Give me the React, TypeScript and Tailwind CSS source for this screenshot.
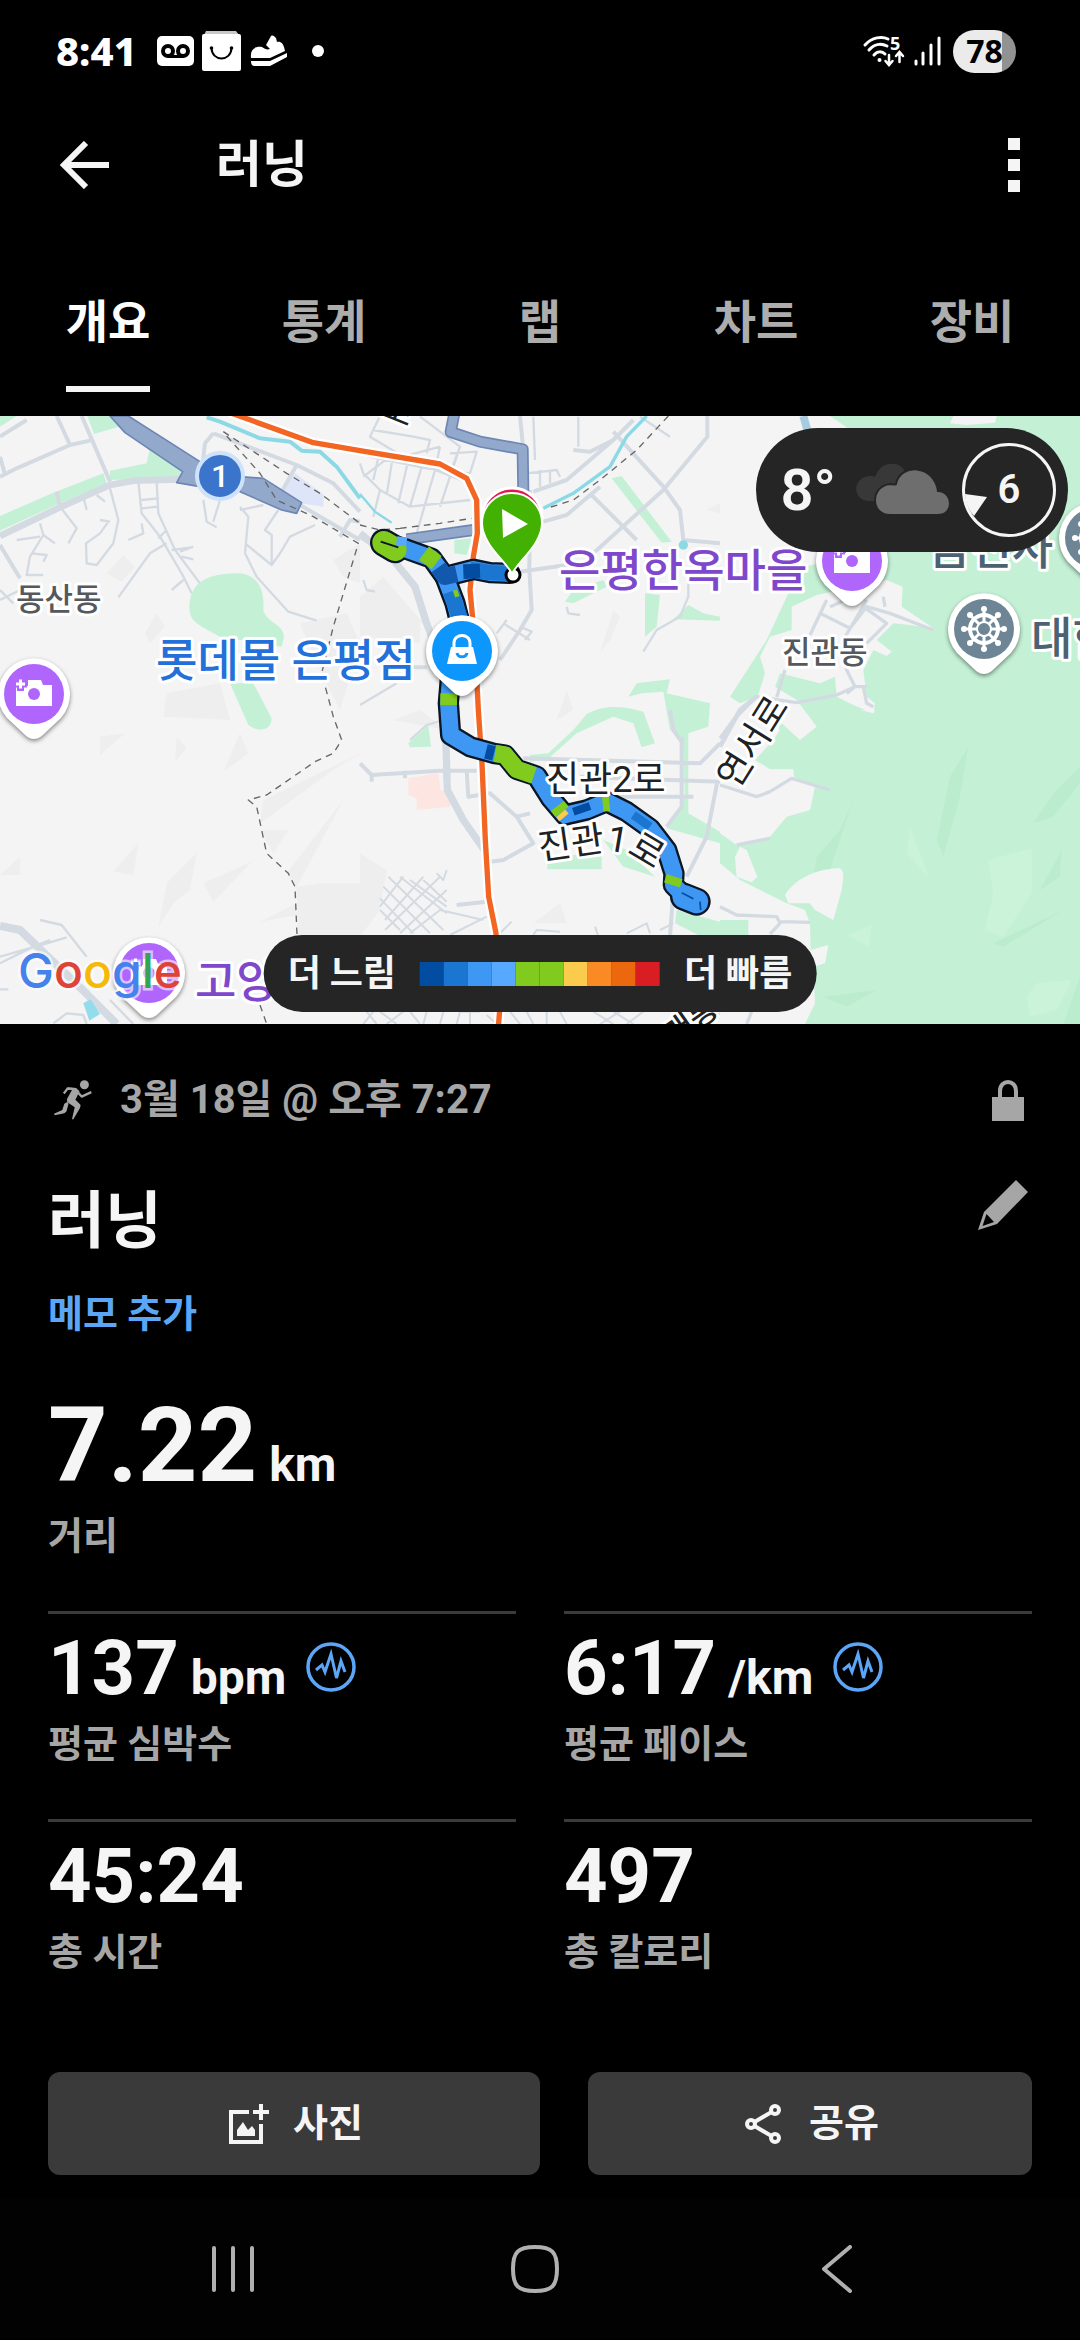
import { type ReactNode } from "react";

const TABS = ["개요", "통계", "랩", "차트", "장비"];

const PACE_COLORS = [
  "bg-[#024da1]",
  "bg-[#1b76d2]",
  "bg-[#3d97f3]",
  "bg-[#57a8ff]",
  "bg-[#81cb1e]",
  "bg-[#81cb1e]",
  "bg-[#facb4d]",
  "bg-[#fa8a25]",
  "bg-[#ec680e]",
  "bg-[#d81e22]",
];

type Stat = { value: string; unit?: string; label: string; graph?: boolean };

const STATS: Stat[] = [
  { value: "137", unit: "bpm", label: "평균 심박수", graph: true },
  { value: "6:17", unit: "/km", label: "평균 페이스", graph: true },
  { value: "45:24", label: "총 시간" },
  { value: "497", label: "총 칼로리" },
];

function StatusBar() {
  return (
    <div className="flex h-[102px] items-center justify-between pl-14 pr-16 text-white">
      <div className="flex items-center">
        <span className="font-['Noto_Sans'] text-[40px] leading-none font-extrabold">8:41</span>
        <svg className="ml-5 h-[30px] w-[37px]" viewBox="0 0 37 30" fill="none">
          <rect width="37" height="30" rx="5" fill="#fff" />
          <circle cx="11" cy="15" r="5" stroke="#000" strokeWidth="4" />
          <circle cx="26" cy="15" r="5" stroke="#000" strokeWidth="4" />
          <path d="M11 20.500H26" stroke="#000" strokeWidth="3" />
        </svg>
        <svg className="ml-2 h-10 w-10" viewBox="0 0 40 40" fill="none">
          <path d="M4 0H34L37 4H2Z" fill="#c8c8c8" />
          <rect y="3" width="39" height="37" rx="2" fill="#fff" />
          <path d="M9.500 17C10 31 29 31 29.500 17" stroke="#000" strokeWidth="2" />
          <circle cx="9.500" cy="17" r="1.800" fill="#000" />
          <circle cx="29.500" cy="17" r="1.800" fill="#000" />
        </svg>
        <svg className="ml-2 h-8 w-[38px]" viewBox="0 0 38 32" fill="#fff">
          <path d="M1 23C0 15 4 11 12 12C15 14 17 15 20 14L16 10L21 1C23 0 24 1 26 3L27 7C31 6 33 9 34 12L35 16L20 23Z" />
          <path d="M1 26H20L37 18V22L20 31H5C2 31 1 29 1 26Z" />
        </svg>
        <span className="ml-6 h-3 w-3 rounded-full bg-white" />
      </div>

      <div className="flex items-center">
        <svg
          className="h-8 w-[42px] overflow-visible"
          viewBox="0 0 42 32"
          fill="none"
          stroke="#fff"
          strokeWidth="3"
          strokeLinecap="round"
        >
          <path d="M2 10C9 2 19 1 25 4M6 15C11 9 18 8 24 11M11 20C14 16 19 16 22 19" />
          <circle cx="16.500" cy="25" r="2" fill="#fff" stroke="none" />
          <path d="M26 20V29M22.500 26L26 30L29.500 26M36.500 27V18M33 21L36.500 17L40 21" strokeWidth="2.500" />
          <text x="27" y="15" fill="#fff" stroke="none" className="font-['Noto_Sans'] text-[18px] font-bold">
            5
          </text>
        </svg>
        <svg className="ml-2 h-[30px] w-7" viewBox="0 0 28 30" stroke="#fff" strokeWidth="3" strokeLinecap="round">
          <path d="M3 25V28M10 17V28M18 9V28M26 2V28" />
        </svg>
        <span className="ml-3 flex h-[43px] w-[63px] items-center justify-center rounded-full bg-linear-to-r from-[#ebebeb] from-78% to-[#929292] to-78% font-['Noto_Sans'] text-[32px] leading-none font-bold text-black">
          78
        </span>
      </div>
    </div>
  );
}

function MapPin({ x, y, color, children }: { x: number; y: number; color: string; children: ReactNode }) {
  return (
    <g transform={`translate(${x} ${y})`}>
      <path
        d="M0 45C-5 45-8 42-12 38L-27 24A36 36 0 1 1 27 24L12 38C8 42 5 45 0 45Z"
        fill="#fff"
        className="drop-shadow-[0_2px_2px_rgba(0,0,0,0.45)]"
      />
      <circle r="30" fill={color} />
      {children}
    </g>
  );
}

function CameraGlyph() {
  return (
    <g>
      <path d="M-18-8H-6V-14H7L9-9H18V12H-18Z" fill="#fff" />
      <circle r="6" fill="#b066fd" />
      <path d="M-20-10H-7M-13.500-17V-3" stroke="#b066fd" strokeWidth="7" />
      <path d="M-18-10H-9M-13.500-14.500V-5.500" stroke="#fff" strokeWidth="3" />
    </g>
  );
}

function WheelGlyph() {
  return (
    <g stroke="#fff" fill="none">
      <circle r="14" strokeWidth="4" />
      <path d="M0-21V21M-21 0H21M-14-14L14 14M-14 14L14-14" strokeWidth="3" />
      <path
        d="M0-20V-20M0 20V20M-20 0H-20M20 0H20M-14-14H-14M14 14H14M-14 14H-14M14-14H14"
        strokeWidth="6"
        strokeLinecap="round"
      />
      <circle r="7" fill="#6d8594" strokeWidth="2" />
    </g>
  );
}

// The terrain is drawn on a 3240 x 1824 grid, cut into three columns of 1080.
function Terrain() {
  return (
    <g transform="scale(0.33333)" fill="none" strokeLinejoin="round">
      <g transform="translate(0 -18)">
        <g fill="#eeeeef">
          <path d="M370 435L405 470L365 515L320 490Z" />
          <path d="M470 610L495 650L450 700L435 670Z" />
          <path d="M500 850L660 820L690 930L490 920Z" />
          <path d="M1000 450L1080 400V520L1030 500ZM900 640L1040 610L1080 700L1020 900L960 780Z" />
          <path d="M300 980L375 970L300 1035ZM530 980L560 1015L525 1055ZM720 970L745 1030L670 1085Z" />
          <path d="M415 1300L400 1395L340 1385ZM590 1330L570 1440L520 1480L475 1550L500 1420ZM755 1355L640 1475L610 1420Z" />
          <path d="M1080 1030L1000 1080L780 1240L790 1170ZM780 1260L865 1260L820 1330ZM1030 1170L960 1300L890 1430L960 1420H1080V1580H895L890 1440L860 1390Z" />
          <path d="M60 1340V1395H0ZM890 1480L780 1535L890 1515Z" />
        </g>
        <g fill="#c4f1d6">
          <path d="M0 18H50L0 50Z" />
          <path d="M262 18H345L375 45L282 72Z" />
          <path d="M330 182L440 160L448 122L400 70L545 180L535 205L330 210Z" />
          <path d="M0 318L160 248L310 190L320 222L180 280L0 362Z" />
          <path d="M568 590C570 500 650 490 720 490C790 500 792 560 790 600C800 640 850 640 852 680L845 710L660 680C600 645 568 640 568 590Z" />
          <path d="M690 820H760L815 925C815 960 780 970 745 945Z" />
        </g>
        <path d="M885 190L972 255L970 290L900 280L848 240Z" fill="#dfe5f8" />
        <g stroke="#d4dae2">
          <path d="M0 378L180 292L330 225L400 212L540 208" strokeWidth="20" />
          <path
            d="M245 18L330 215M170 18L210 105M0 200L50 175L210 105L270 92M0 80L80 30M0 405L60 505M0 140L14 190M900 285L1080 390M640 70L615 100L608 160M640 70L890 165L1000 220L1080 305M890 165L845 245M1020 380L1050 330L1080 335M170 245L180 290"
            strokeWidth="12"
          />
          <path
            d="M330 235L355 330L340 400L290 465L260 460L258 400L300 370L325 335M415 215L425 310L480 380L545 490L575 550M470 215L475 310L525 420L600 520M355 562L450 430L500 400M120 340L130 375L90 440L80 495H130M180 290L230 355L205 400M610 270L620 335L650 352M660 270L640 335M720 290L745 320L735 430L770 500L865 605L950 632M735 400L815 465V375L795 360L835 300M815 465L840 430L870 380L945 345M425 270L475 265M425 295L475 290M475 385L500 360M300 330L330 335M50 390L120 380M260 300L250 260M290 255L315 275M130 375L165 400M95 430L140 435L130 455M425 340L430 370L385 390M720 300L790 285M540 425L580 410M545 440L580 448M515 420L575 412M515 540L550 510M0 540L40 580M0 570L60 540"
            strokeWidth="7"
          />
          <path d="M0 1548L60 1560L250 1742L350 1842" strokeWidth="24" />
          <path
            d="M120 1530L185 1545L260 1640M0 1660L100 1610L150 1590M0 1640L140 1600L200 1582M160 1840L200 1810L250 1815L260 1842M0 1738H25M330 1770L400 1842"
            strokeWidth="7"
          />
        </g>
        <path d="M250 1780L272 1768L300 1812L268 1832Z" fill="#93dcec" />
        <path d="M620 22L660 35L780 85L870 95L905 122L960 125L1010 170L1080 265" stroke="#8cd9e6" strokeWidth="12" />
        <g fill="#93a9cb" stroke="#6d86b3" strokeWidth="5">
          <path d="M330 18H385L600 155V230L530 218L548 185L375 68Z" />
          <path d="M722 200L790 205L905 278L890 310L845 300L720 245Z" />
        </g>
        <g stroke="#666" strokeWidth="4" strokeDasharray="20 16">
          <path d="M670 65L860 190L960 250L1080 340" />
          <path d="M680 78L780 190L830 270L940 320L1075 400L1000 650L965 790L1000 920L1025 990L1000 1030L945 1055L800 1155L745 1170L770 1190L800 1330L865 1390L885 1430L892 1600M780 1785L800 1842" />
        </g>
      </g>

      <g transform="translate(1080 -18)">
        <g fill="#eeeeef">
          <path d="M780 620L750 690L720 730L760 600ZM620 840L640 900L590 930ZM1080 280L1040 300L1080 310ZM70 500L190 640L60 620L0 560Z" />
          <path d="M0 560L180 640V700L0 680ZM180 900L260 960L100 930ZM600 1480L620 1540H520ZM0 1330L80 1380L60 1500L0 1580Z" />
        </g>
        <path d="M145 1105L235 1090L242 1140L275 1152L270 1190L170 1200V1165L145 1155Z" fill="#fde5e1" />
        <g fill="#c4f1d6">
          <path d="M755 205L785 198L935 395L905 398Z" />
          <path d="M283 390L335 385L320 435L283 430Z" />
          <path d="M615 575L640 540L730 510L740 530L640 580Z" />
          <path d="M855 550L900 555L890 650L855 680Z" />
          <path d="M940 628L985 585L1030 610L1080 620V632Z" />
          <path d="M805 860L830 820L930 808L920 850L1050 880L1045 950L985 970V1210L1080 1265V1300L920 1255L975 1165L968 985L930 960L910 845L845 850Z" />
          <path d="M510 1035L565 1030L640 960L680 912C740 880 800 890 850 905L885 1000L845 1012L820 940L760 920L650 970L560 1050L510 1055Z" />
          <path d="M562 1335H725V1378H562ZM730 1290L800 1320L885 1400L790 1370Z" />
          <path d="M145 1000L205 945L213 1010L150 1012Z" />
          <path d="M950 1500L1080 1535V1580H1025L945 1540Z" />
        </g>
        <g stroke="#d4dae2">
          <path d="M0 370L100 450L165 530L200 640L230 720M255 900L262 1140L310 1230L380 1330" strokeWidth="22" />
          <path
            d="M480 18L490 120M510 240L508 480L515 600L480 660L420 750M520 245L620 210L760 90L820 30M550 335L620 315L720 230M1042 18V80L910 240L700 430M760 65L910 230L960 300L970 390L1080 400M690 250L830 390M480 485L620 465M640 120L690 125L760 90M30 400L0 380M0 1060L35 1095L240 1082H350M320 1082L325 1160L390 1150L470 1220L520 1300L430 1350L390 1355M470 1220L510 1210M490 1045L1020 1060L1080 1000M660 1100L1080 1115M740 1160H1000M965 980V1190L920 1250M1072 1115L1040 1280L980 1400M940 1440L930 1580M290 1485L380 1475M35 1095V1115M135 1082V1105M160 772H200M930 900L940 960L968 1000"
            strokeWidth="12"
          />
          <path
            d="M40 60L160 80L210 90L200 130M60 18L30 80L130 140L240 110M240 110L225 180L170 370M0 160L10 190L60 240L150 290L330 270M180 20L300 110L270 200L240 290M30 140L200 175L330 190M60 120L40 210M100 130L80 255M145 150L115 280M185 170L150 290M225 180L330 220M270 130L350 125L330 190M60 240L40 320M10 200L90 140M300 110L270 190M655 20V110M520 20L525 150M500 190L590 180L600 200M540 180V230M570 180V220M985 520L985 560L960 620L890 660L850 725M430 640L510 690M440 630L410 670M480 650L515 665L495 690M0 885L110 820M150 990L200 945L250 930M10 510L20 540L45 545M620 590L625 610L660 615M840 20L930 80"
            strokeWidth="7"
          />
          <path
            d="M85 1400L250 1560M70 1430L210 1570M60 1465L160 1570M60 1500L120 1560M120 1400L260 1510M150 1410L260 1490M190 1410L260 1475M60 1490L130 1400M75 1530L190 1400M75 1560L240 1400M120 1570L260 1440M150 1570L240 1500L370 1530M230 1390L250 1410L260 1380M270 1575L380 1520M420 1570L455 1535M520 1575L530 1560L600 1565M705 1550L715 1580M800 1570L860 1540L870 1570M900 1560L940 1540"
            strokeWidth="6"
          />
          <path
            d="M10 1842L40 1805M50 1842L20 1805M60 1805L110 1842M80 1842L130 1805M150 1805L180 1842M200 1805L190 1842M240 1842L250 1805M290 1842L300 1805H360M330 1805V1842M380 1815L410 1842M450 1805L480 1842M520 1842L500 1805M560 1805V1842M600 1805L620 1842M700 1805L760 1842M720 1842L780 1805M760 1805L820 1842M800 1842L850 1805M1020 1842L1080 1810"
            strokeWidth="6"
          />
        </g>
        <path d="M860 18L800 80L750 170L640 250L550 295" stroke="#8cd9e6" strokeWidth="10" />
        <path d="M0 252L45 305L95 338" stroke="#8cd9e6" strokeWidth="7" />
        <circle cx="970" cy="405" r="14" fill="#8cd9e6" />
        <g stroke="#666" strokeWidth="4" strokeDasharray="20 16">
          <path d="M925 18L830 120L720 210L640 270L560 295M120 355L240 340L335 325M0 345L60 360L120 355" />
        </g>
        <g stroke="#6d86b3" strokeWidth="36">
          <path d="M285 0L272 66L360 95L488 118L490 250M140 388L340 360" />
        </g>
        <g stroke="#93a9cb" strokeWidth="26">
          <path d="M285 0L272 66L360 95L488 118L490 250M140 388L340 360" />
        </g>
      </g>

      <g transform="translate(2160 -18)">
        <path
          d="M330 18L450 100V430L250 470L205 550L140 690L30 860L60 880L110 860L180 960L160 990L105 1050L150 1078H220L222 1100L285 1130L270 1200L200 1220L150 1280L50 1305L0 1270V1360L60 1410L200 1480L255 1500L270 1540L272 1620L325 1605L315 1660L280 1670L285 1780L255 1842H1080V18Z"
          fill="#c4f1d6"
        />
        <path d="M0 1530L85 1530V1580H0Z" fill="#c4f1d6" />
        <g fill="#bbecce">
          <path d="M745 1010L720 1160L670 1340L650 1290L690 1100ZM1080 1070L1000 1150L940 1240L1000 1220L1080 1120ZM1025 1320L960 1440L1020 1400ZM820 1600L1030 1500L850 1610ZM1080 1700L1030 1842H1080ZM400 1170L360 1260L290 1340L280 1400L330 1380ZM310 1760L470 1740L380 1790Z" />
        </g>
        <g fill="#cbf3d9">
          <path d="M805 1350L935 1315V1450L850 1580L795 1560L820 1450ZM570 1250L625 1400L560 1330ZM920 1760L950 1720L1055 1710L1010 1800L930 1820ZM385 1575L455 1545L445 1610Z" />
        </g>
        <g fill="#f4f4f4">
          <path d="M215 590L290 555L500 510L548 530L545 590L640 655L570 645L520 640L470 690L515 725L500 738L460 720L430 780L440 860L465 880L460 910L400 885L350 860L345 800L300 820L180 790L165 830L230 870L290 950L240 990L110 870L135 790L120 740L150 680L215 660Z" />
          <path d="M195 1455C230 1400 300 1375 360 1375C375 1385 370 1410 365 1440L340 1530L285 1500L270 1480H205Z" />
          <path d="M60 1310L80 1320L112 1400L95 1417L50 1400L45 1340Z" />
          <path d="M690 40L700 18H830L825 38L740 45Z" />
          <path d="M420 900L465 900L460 910Z" />
        </g>
        <g stroke="#d4dae2">
          <path
            d="M320 570L270 675M300 610L390 655L440 590L510 610L640 660M440 570L370 690L380 780L405 830L350 855L230 878L110 860L40 930L0 985M195 780L170 862M430 590L500 640L440 700M400 560L330 590M490 560L495 590M430 830L440 880L460 890M380 850L405 830H440"
            strokeWidth="10"
          />
          <path d="M0 1125L110 1160L150 1145L215 1105L330 1140M0 1490L50 1515L170 1520L180 1540L150 1572M180 1535L270 1537M80 1842L95 1805M50 1305L150 1285" strokeWidth="10" />
          <path d="M0 1010L60 900L110 860" strokeWidth="14" />
        </g>
        <path d="M250 18L262 60" stroke="#a9cbe0" strokeWidth="24" />
      </g>
    </g>
  );
}

function RunRoute() {
  const metro =
    "M-390 8L-140 98L0 122L240 162L320 205L350 270L352 370L340 440L330 540L345 700L355 900L366 1060L376 1290L386 1460L408 1570L420 1790L415 1850";
  const north = "M450 490L390 488L340 478L255 500L215 445L140 418L80 400";
  const south =
    "M255 500L285 580L300 640L275 760L265 880L272 975L330 1010L400 1030L435 1035L470 1078L530 1098L572 1165L615 1215L680 1200L740 1175L800 1205L870 1255L920 1320L942 1390L940 1425L985 1470L1010 1475";
  return (
    <g transform="translate(360 -6) scale(0.33333)" fill="none" strokeLinecap="round" strokeLinejoin="round">
      <path d={metro} stroke="#fff" strokeWidth="30" strokeLinecap="butt" />
      <path d={metro} stroke="#f26522" strokeWidth="16" strokeLinecap="butt" />
      <g stroke="#0a1626">
        <path d={north} strokeWidth="64" />
        <path d={south} strokeWidth="64" />
        <path d="M72 398L105 418M972 1460L1010 1475" strokeWidth="84" />
      </g>
      <g stroke="#3d97f3">
        <path d={north} strokeWidth="50" />
        <path d={south} strokeWidth="50" />
        <path d="M972 1460L1010 1475" strokeWidth="70" />
      </g>
      <g strokeLinecap="butt">
        <path d="M72 398L105 418" stroke="#81cb1e" strokeWidth="70" strokeLinecap="round" />
        <path d="M62 395L115 412" stroke="#0a1626" strokeWidth="6" />
        <path d="M110 392L140 396" stroke="#57a8ff" strokeWidth="26" />
        <path d="M192 430L230 458" stroke="#81cb1e" strokeWidth="50" />
        <path d="M450 490L390 488L330 478" stroke="#1b76d2" strokeWidth="46" />
        <path d="M360 483L310 485" stroke="#024da1" strokeWidth="44" />
        <path d="M290 492L255 500L235 472" stroke="#1259ad" strokeWidth="50" />
        <path d="M272 545L300 625" stroke="#1b76d2" strokeWidth="48" />
        <path d="M285 540L292 560" stroke="#81cb1e" strokeWidth="14" />
        <path d="M266 850L266 885" stroke="#81cb1e" strokeWidth="50" />
        <path d="M378 1024L402 1030" stroke="#024da1" strokeWidth="44" />
        <path d="M405 1030L435 1035L470 1078L522 1096" stroke="#81cb1e" strokeWidth="52" />
        <path d="M592 1188L606 1206" stroke="#81cb1e" strokeWidth="50" />
        <path d="M602 1210L612 1222" stroke="#facb4d" strokeWidth="36" />
        <path d="M640 1205L690 1188" stroke="#024da1" strokeWidth="24" />
        <path d="M728 1180L748 1178" stroke="#81cb1e" strokeWidth="50" />
        <path d="M820 1215L870 1250" stroke="#1b76d2" strokeWidth="26" />
        <path d="M944 1400L936 1425" stroke="#81cb1e" strokeWidth="50" />
        <path d="M965 1448L1000 1466M1020 1475L1022 1500" stroke="#024da1" strokeWidth="5" />
      </g>
    </g>
  );
}

function RouteMap() {
  return (
    <svg
      className="block h-auto w-full bg-[#f4f4f4] font-['Roboto','Noto_Sans_CJK_KR',sans-serif]"
      viewBox="0 0 1080 608"
      role="img"
      aria-label="지도"
    >
      <Terrain />
      <RunRoute />

      <circle cx="220" cy="60" r="23" fill="#3a75cb" stroke="#cfe2fb" strokeWidth="4" />
      <text x="220" y="71" textAnchor="middle" className="fill-white text-[32px] font-medium">
        1
      </text>

      <MapPin x={34} y={278} color="#b066fd">
        <CameraGlyph />
      </MapPin>
      <MapPin x={852} y={145} color="#b066fd">
        <CameraGlyph />
      </MapPin>
      <MapPin x={149} y={557} color="#b066fd">
        <CameraGlyph />
      </MapPin>
      <MapPin x={984} y={213} color="#6d8594">
        <WheelGlyph />
      </MapPin>
      <MapPin x={1095} y={122} color="#6d8594">
        <WheelGlyph />
      </MapPin>
      <MapPin x={462} y={235} color="#0d96fb">
        <path d="M-11-4H11L15 13H-15Z" fill="#fff" />
        <path d="M-8-3V-8C-8-18 8-18 8-8V-3" fill="none" stroke="#fff" strokeWidth="3" />
        <path d="M-5 2C-4 7 4 7 5 2" fill="none" stroke="#0d96fb" strokeWidth="3" />
      </MapPin>

      <g>
        <circle cx="513" cy="159" r="7" fill="#fff" stroke="#000" strokeWidth="3" />
        <path
          d="M512 152C505 143 482 123 482 102A30 30 0 0 1 542 102C542 123 519 143 512 152Z"
          fill="#e3174f"
          stroke="#fff"
          strokeWidth="3"
        />
        <path
          d="M512 158C507 146 482 129 482 107A30 30 0 0 1 542 107C542 129 517 146 512 158Z"
          fill="#42b101"
          stroke="#fff"
          strokeWidth="2"
        />
        <path d="M502 93L528 108L503 122Z" fill="#fff" />
      </g>

      <g stroke="#fff" strokeWidth="6" strokeLinejoin="round" paintOrder="stroke">
        <g className="text-[31px] font-medium" fill="#55585c">
          <text x="16" y="194">동산동</text>
          <text x="782" y="247">진관동</text>
        </g>
        <g className="text-[45px] font-medium">
          <text x="156" y="261" fill="#2370da">롯데몰 은평점</text>
          <text x="559" y="171" fill="#7f48cc">은평한옥마을</text>
          <text x="195" y="582" fill="#7f48cc">고양</text>
          <text x="929" y="149" fill="#4c6272">금선사</text>
          <text x="1031" y="239" fill="#4c6272">대한</text>
        </g>
        <g className="text-[36px]" fill="#202124">
          <text x="546" y="376">진관2로</text>
          <path id="jingwan" d="M540 444L596 436C612 433 626 437 640 445L670 463" fill="none" stroke="none" />
          <text>
            <textPath href="#jingwan">진관1로</textPath>
          </text>
          <text x="753" y="326" dy="12" textAnchor="middle" transform="rotate(-58 753 326)">
            연서로
          </text>
          <text x="378" y="-1" transform="rotate(22 378 -1)">로</text>
        </g>
        <text x="674" y="630" transform="rotate(-35 674 630)" className="text-[31px] font-medium" fill="#202124">
          매봉
        </text>
      </g>

      <text
        x="18"
        y="572"
        stroke="#fff"
        strokeWidth="5"
        strokeOpacity="0.600"
        paintOrder="stroke"
        className="font-['Inter'] text-[48px] font-medium"
      >
        <tspan fill="#4582ec">G</tspan>
        <tspan fill="#de4238">o</tspan>
        <tspan fill="#f5b90a">o</tspan>
        <tspan fill="#4582ec">g</tspan>
        <tspan fill="#34a452">l</tspan>
        <tspan fill="#de4238">e</tspan>
      </text>
    </svg>
  );
}

function WeatherBadge() {
  return (
    <div className="absolute top-3 right-3 flex h-[124px] items-center rounded-full bg-[#252525] pr-3 pl-6 text-[#f5f5f5]">
      <span className="text-[58px] leading-none font-semibold">8°</span>
      <svg className="ml-5 h-[52px] w-[94px]" viewBox="0 0 94 52">
        <path d="M12 37C-4 36-4 13 14 12C20 12 18 14 20 11C26-4 46-4 50 10L40 37Z" fill="#383838" />
        <path
          d="M34 51C14 51 14 22 34 20C37 20 38 21 40 20C44-1 78 0 82 27C98 28 98 51 82 51Z"
          fill="#6e6e6e"
          stroke="#252525"
          strokeWidth="2"
        />
      </svg>
      <div className="relative ml-3 flex h-[94px] w-[94px] items-center justify-center rounded-full border-[3px] border-[#f5f5f5]">
        <span className="text-[40px] leading-none font-semibold">6</span>
        <svg className="absolute inset-0 h-full w-full" viewBox="0 0 88 88">
          <path d="M0 48L22 51L9 70C4 64 0 57 0 48Z" fill="#f5f5f5" />
        </svg>
      </div>
    </div>
  );
}

function PaceLegend() {
  return (
    <div className="absolute bottom-3 left-1/2 flex h-[77px] -translate-x-1/2 items-center gap-6 rounded-full bg-[#252525] px-6 text-[36px] leading-none font-bold whitespace-nowrap text-[#f5f5f5]">
      <span>더 느림</span>
      <div className="flex">
        {PACE_COLORS.map((color, i) => (
          <span key={i} className={`h-6 w-6 ${color}`} />
        ))}
      </div>
      <span>더 빠름</span>
    </div>
  );
}

function PulseIcon() {
  return (
    <svg className="h-[50px] w-[50px]" viewBox="0 0 50 50" fill="none" stroke="#5ba6f6">
      <circle cx="25" cy="25" r="23" strokeWidth="3.500" />
      <path d="M10 28L16 23L19 30L25 12L30.500 36L35 19L39 30" strokeWidth="3" />
    </svg>
  );
}

function StatCell({ value, unit, label, graph }: Stat) {
  return (
    <div className="border-t-[3px] border-[#3b3b3b] pt-3 pb-[51px]">
      <div className="flex h-[84px] items-baseline gap-3">
        <span className="text-[76px] leading-[84px] font-bold">{value}</span>
        {unit && <span className="text-[48px] leading-none font-bold">{unit}</span>}
        {graph && (
          <button type="button" aria-label={`${label} 차트`} className="mt-4 ml-2 self-start">
            <PulseIcon />
          </button>
        )}
      </div>
      <div className="mt-[10px] text-[38px] leading-[48px] font-bold text-[#a6a6a6]">{label}</div>
    </div>
  );
}

export default function App() {
  return (
    <div className="flex min-h-screen flex-col bg-black font-['Roboto','Noto_Sans_CJK_KR',sans-serif] text-[#f5f5f5]">
      <StatusBar />

      <header className="flex h-[126px] items-center px-[60px]">
        <button type="button" aria-label="뒤로">
          <svg className="h-12 w-[50px]" viewBox="0 0 50 48" fill="none" stroke="#f5f5f5" strokeWidth="6">
            <path d="M26 2L4 24L26 46M4 24H49" />
          </svg>
        </button>
        <h1 className="ml-[106px] text-[50px] leading-[60px] font-bold">러닝</h1>
        <button type="button" aria-label="더보기" className="ml-auto flex flex-col gap-[9px]">
          <span className="h-3 w-3 bg-[#f5f5f5]" />
          <span className="h-3 w-3 bg-[#f5f5f5]" />
          <span className="h-3 w-3 bg-[#f5f5f5]" />
        </button>
      </header>

      <nav className="grid grid-cols-5 pt-16 pb-6">
        {TABS.map((tab, i) => (
          <a
            key={tab}
            href="#"
            className={
              i === 0
                ? "justify-self-center border-b-[6px] border-[#f5f5f5] pb-[34px] text-[46px] leading-[60px] font-bold text-white"
                : "justify-self-center text-[46px] leading-[60px] font-bold text-[#adadad]"
            }
          >
            {tab}
          </a>
        ))}
      </nav>

      <div className="relative">
        <RouteMap />
        <WeatherBadge />
        <PaceLegend />
      </div>

      <main className="px-12 pt-[46px]">
        <div className="flex h-[60px] items-center">
          <svg className="ml-[6px] h-10 w-[38px]" viewBox="0 0 110 114" fill="none" stroke="#a6a6a6" strokeLinejoin="round">
            <circle cx="88" cy="13" r="13" fill="#a6a6a6" stroke="none" />
            <path
              d="M46 20L64 22L74 32L62 56L76 70C78 74 76 78 74 82L56 113H52L60 78L42 66C36 62 36 56 40 50L52 28L40 28L31 40L26 36L38 20Z"
              fill="#a6a6a6"
              stroke="none"
            />
            <path d="M68 34L80 47L108 34" strokeWidth="7" />
            <path d="M39 62L42 68L36 90L30 95L2 101L0 97L24 86L30 68Z" fill="#a6a6a6" stroke="none" />
          </svg>
          <span className="ml-7 text-[40px] leading-none font-bold text-[#a6a6a6]">3월 18일 @ 오후 7:27</span>
          <svg className="mr-2 ml-auto h-[41px] w-8" viewBox="0 0 32 41" fill="none">
            <rect y="17" width="32" height="24" fill="#a6a6a6" />
            <path d="M8 18V11C8-1 24-1 24 11V18" stroke="#a6a6a6" strokeWidth="4" />
          </svg>
        </div>

        <div className="mt-[50px] flex items-start justify-between">
          <h2 className="text-[62px] leading-[84px] font-bold">러닝</h2>
          <button type="button" aria-label="이름 편집" className="mr-1">
            <svg className="h-[50px] w-[50px]" viewBox="0 0 50 50" fill="#a6a6a6">
              <path d="M38 0L50 12L19 44L0 50L6 32Z" />
              <path d="M8.500 34L16 42L4.500 46Z" fill="#000" />
            </svg>
          </button>
        </div>

        <a href="#" className="mt-[26px] inline-block text-[38px] leading-[48px] font-bold text-[#5ba6f6]">
          메모 추가
        </a>

        <div className="mt-[52px] flex items-baseline gap-3">
          <span className="text-[104px] leading-[112px] font-bold">7.22</span>
          <span className="text-[48px] leading-none font-bold">km</span>
        </div>
        <div className="mt-[10px] text-[38px] leading-[48px] font-bold text-[#a6a6a6]">거리</div>

        <div className="mt-[51px] grid grid-cols-2 gap-x-12">
          {STATS.map((stat) => (
            <StatCell key={stat.label} {...stat} />
          ))}
        </div>

        <div className="mt-[45px] grid grid-cols-[492fr_444fr] gap-12 text-[38px] font-bold">
          <button type="button" className="flex h-[103px] items-center justify-center gap-6 rounded-xl bg-[#3a3a3a] pl-1">
            <svg className="h-10 w-10" viewBox="0 0 40 40" fill="none" stroke="#f5f5f5" strokeWidth="4">
              <path d="M20 8H2V38H32V20M32 0V16M24 8H40" />
              <path d="M8 32V26L14 18L19 26L23 22L26 26V32Z" fill="#f5f5f5" stroke="none" />
            </svg>
            사진
          </button>
          <button type="button" className="flex h-[103px] items-center justify-center gap-7 rounded-xl bg-[#3a3a3a] pl-1">
            <svg className="h-10 w-9" viewBox="0 0 36 40" fill="none" stroke="#f5f5f5" strokeWidth="4">
              <circle cx="6" cy="20" r="4" />
              <circle cx="30" cy="6" r="4" />
              <circle cx="30" cy="34" r="4" />
              <path d="M9.500 18L26.500 8M9.500 22L26.500 32" />
            </svg>
            공유
          </button>
        </div>
      </main>

      <nav className="mt-6 grid h-[140px] grid-cols-3 items-center justify-items-center bg-[#020202] pr-[92px] pl-[82px]">
        <button type="button" aria-label="최근 앱">
          <svg className="h-12 w-12" viewBox="0 0 48 48" stroke="#b0b0b0" strokeWidth="4" strokeLinecap="round">
            <path d="M5 3V45M24 3V45M43 3V45" />
          </svg>
        </button>
        <button type="button" aria-label="홈">
          <svg className="h-12 w-12" viewBox="0 0 48 48" fill="none" stroke="#b0b0b0" strokeWidth="4">
            <path d="M24 2C41 2 46 7 46 24S41 46 24 46S2 41 2 24S7 2 24 2Z" />
          </svg>
        </button>
        <button type="button" aria-label="뒤로 가기">
          <svg
            className="h-12 w-8"
            viewBox="0 0 32 48"
            fill="none"
            stroke="#b0b0b0"
            strokeWidth="4"
            strokeLinecap="round"
            strokeLinejoin="round"
          >
            <path d="M29 2L3 24L29 46" />
          </svg>
        </button>
      </nav>
    </div>
  );
}
